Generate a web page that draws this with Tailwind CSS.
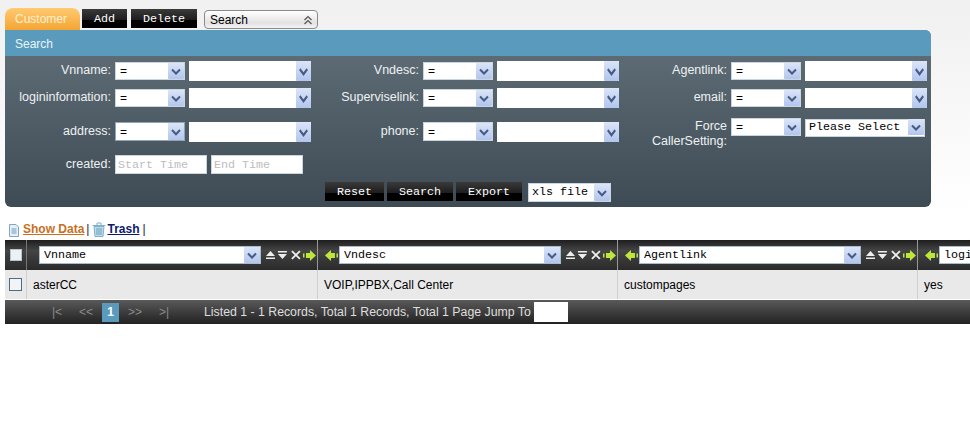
<!DOCTYPE html>
<html lang="en">
<head>
    <meta charset="UTF-8">
    <title>Customer</title>
    <script src="https://cdn.jsdelivr.net/npm/@tailwindcss/browser@4"></script>
</head>
<body class="h-[426px] w-[970px] overflow-hidden bg-[linear-gradient(#f0f0f0,#fff_210px)] font-['Liberation_Sans',Arial,sans-serif] text-xs text-black">
    <!-- shared icons -->
    <svg class="absolute h-0 w-0">
        <defs>
            <linearGradient id="arrbg" x1="0" y1="0" x2="0" y2="1">
                <stop offset="0" stop-color="#dbe5f8"/>
                <stop offset="1" stop-color="#b2c5ee"/>
            </linearGradient>
        </defs>
        <symbol id="arr" viewBox="0 0 16 16" preserveAspectRatio="none">
            <rect width="16" height="16" rx="1" fill="url(#arrbg)"/>
            <path d="M4 6.500 8 10.500 12 6.500" fill="none" stroke="#465a82" stroke-width="2"/>
        </symbol>
        <symbol id="right" viewBox="0 0 14 13">
            <path d="M0 4.500H1.500V8.500H0ZM3 4H7V1L13 6.500 7 12V9H3Z" fill="#bfe63c"/>
        </symbol>
        <symbol id="left" viewBox="0 0 14 13">
            <path d="M14 4.500H12.500V8.500H14ZM11 4H7V1L1 6.500 7 12V9H11Z" fill="#bfe63c"/>
        </symbol>
        <symbol id="tools" viewBox="0 0 36 10">
            <path d="M0 6 4.500 1 9 6ZM0 7.500H9V9H0Z" fill="#eee"/>
            <path d="M12 1H21V2.500H12ZM12 4H21L16.500 9Z" fill="#eee"/>
            <path d="M26 1 34 9M34 1 26 9" stroke="#eee" stroke-width="1.800" fill="none"/>
        </symbol>
    </svg>

    <!-- Tabs -->
    <div class="flex h-[30px] items-end pl-[5px]">
        <div class="flex h-[22px] w-[75px] items-center rounded-t-lg bg-linear-to-b from-[#ffca70] to-[#f4a52f] pl-[10px] text-[#fdf0d0]">Customer</div>
        <button class="mb-[2px] ml-[2px] h-[19px] w-[45px] bg-[linear-gradient(#3a3a3a,#1c1c1c_60%,#000_60%)] pt-[3px] font-['Liberation_Mono',monospace] text-[11.700px] text-white">Add</button>
        <button class="mb-[2px] ml-1 h-[19px] w-[66px] bg-[linear-gradient(#3a3a3a,#1c1c1c_60%,#000_60%)] pt-[3px] font-['Liberation_Mono',monospace] text-[11.700px] text-white">Delete</button>
        <div class="mb-px ml-[7px] flex h-[19px] w-[114px] items-center justify-between rounded border border-[#8a8a8a] bg-[linear-gradient(#fff,#e2e2e2_70%,#f4f4f4)] pl-[5px] pr-[4px]">
            <span>Search</span>
            <svg class="h-[10px] w-[10px]" viewBox="0 0 10 10" fill="none" stroke="#555" stroke-width="1.200"><path d="M1.500 5 5 1.500 8.500 5M1.500 9 5 5.500 8.500 9"/></svg>
        </div>
    </div>

    <!-- Search panel -->
    <div class="ml-[5px] h-[177px] w-[926px] overflow-hidden rounded-tr-md rounded-b-md bg-linear-to-b from-[#627079] to-[#3e4b54]">
        <div class="flex h-[26px] items-center bg-[#5a9bbd] pl-[10px] pt-px text-[#e8f4fa]">Search</div>
        <div class="grid grid-cols-[308px_308px_310px] grid-rows-[27px_29px_38px_27px] pt-[5px] text-[12.500px] text-[#eef1f3]">
            <!-- row 1 -->
            <div class="flex items-start">
                <label class="w-[106px] pt-px text-right">Vnname:</label>
                <div class="relative ml-1 mt-px h-[18px] w-[70px]"><select class="h-full w-full appearance-none border border-[#c9d6de] bg-white pl-1 text-xs text-black"><option>=</option></select><svg class="pointer-events-none absolute right-px top-px h-4 w-4"><use href="#arr"/></svg></div>
                <div class="relative ml-1 h-5 w-[122px]"><select class="h-full w-full appearance-none bg-white"></select><svg class="pointer-events-none absolute right-0 top-0 h-5 w-[15px]"><use href="#arr"/></svg></div>
            </div>
            <div class="flex items-start">
                <label class="w-[106px] pt-px text-right">Vndesc:</label>
                <div class="relative ml-1 mt-px h-[18px] w-[70px]"><select class="h-full w-full appearance-none border border-[#c9d6de] bg-white pl-1 text-xs text-black"><option>=</option></select><svg class="pointer-events-none absolute right-px top-px h-4 w-4"><use href="#arr"/></svg></div>
                <div class="relative ml-1 h-5 w-[122px]"><select class="h-full w-full appearance-none bg-white"></select><svg class="pointer-events-none absolute right-0 top-0 h-5 w-[15px]"><use href="#arr"/></svg></div>
            </div>
            <div class="flex items-start">
                <label class="w-[106px] pt-px text-right">Agentlink:</label>
                <div class="relative ml-1 mt-px h-[18px] w-[70px]"><select class="h-full w-full appearance-none border border-[#c9d6de] bg-white pl-1 text-xs text-black"><option>=</option></select><svg class="pointer-events-none absolute right-px top-px h-4 w-4"><use href="#arr"/></svg></div>
                <div class="relative ml-1 h-5 w-[122px]"><select class="h-full w-full appearance-none bg-white"></select><svg class="pointer-events-none absolute right-0 top-0 h-5 w-[15px]"><use href="#arr"/></svg></div>
            </div>
            <!-- row 2 -->
            <div class="flex items-start">
                <label class="w-[106px] pt-px text-right">logininformation:</label>
                <div class="relative ml-1 mt-px h-[18px] w-[70px]"><select class="h-full w-full appearance-none border border-[#c9d6de] bg-white pl-1 text-xs text-black"><option>=</option></select><svg class="pointer-events-none absolute right-px top-px h-4 w-4"><use href="#arr"/></svg></div>
                <div class="relative ml-1 h-5 w-[122px]"><select class="h-full w-full appearance-none bg-white"></select><svg class="pointer-events-none absolute right-0 top-0 h-5 w-[15px]"><use href="#arr"/></svg></div>
            </div>
            <div class="flex items-start">
                <label class="w-[106px] pt-px text-right">Superviselink:</label>
                <div class="relative ml-1 mt-px h-[18px] w-[70px]"><select class="h-full w-full appearance-none border border-[#c9d6de] bg-white pl-1 text-xs text-black"><option>=</option></select><svg class="pointer-events-none absolute right-px top-px h-4 w-4"><use href="#arr"/></svg></div>
                <div class="relative ml-1 h-5 w-[122px]"><select class="h-full w-full appearance-none bg-white"></select><svg class="pointer-events-none absolute right-0 top-0 h-5 w-[15px]"><use href="#arr"/></svg></div>
            </div>
            <div class="flex items-start">
                <label class="w-[106px] pt-px text-right">email:</label>
                <div class="relative ml-1 mt-px h-[18px] w-[70px]"><select class="h-full w-full appearance-none border border-[#c9d6de] bg-white pl-1 text-xs text-black"><option>=</option></select><svg class="pointer-events-none absolute right-px top-px h-4 w-4"><use href="#arr"/></svg></div>
                <div class="relative ml-1 h-5 w-[122px]"><select class="h-full w-full appearance-none bg-white"></select><svg class="pointer-events-none absolute right-0 top-0 h-5 w-[15px]"><use href="#arr"/></svg></div>
            </div>
            <!-- row 3 -->
            <div class="flex h-[29px] items-center">
                <label class="w-[106px] text-right">address:</label>
                <div class="relative ml-1 h-[19px] w-[70px]"><select class="h-full w-full appearance-none border border-[#8fa6b8] bg-white pl-1 text-xs text-black"><option>=</option></select><svg class="pointer-events-none absolute right-px top-px h-[17px] w-4"><use href="#arr"/></svg></div>
                <div class="relative ml-1 h-5 w-[122px]"><select class="h-full w-full appearance-none bg-white"></select><svg class="pointer-events-none absolute right-0 top-0 h-5 w-[15px]"><use href="#arr"/></svg></div>
            </div>
            <div class="flex h-[29px] items-center">
                <label class="w-[106px] text-right">phone:</label>
                <div class="relative ml-1 h-[19px] w-[70px]"><select class="h-full w-full appearance-none border border-[#c9d6de] bg-white pl-1 text-xs text-black"><option>=</option></select><svg class="pointer-events-none absolute right-px top-px h-[17px] w-4"><use href="#arr"/></svg></div>
                <div class="relative ml-1 h-5 w-[122px]"><select class="h-full w-full appearance-none bg-white"></select><svg class="pointer-events-none absolute right-0 top-0 h-5 w-[15px]"><use href="#arr"/></svg></div>
            </div>
            <div class="flex items-start">
                <label class="w-[106px] pt-[2px] text-right leading-[15px]">Force<br>CallerSetting:</label>
                <div class="relative ml-1 mt-px h-[18px] w-[70px]"><select class="h-full w-full appearance-none border border-[#c9d6de] bg-white pl-1 text-xs text-black"><option>=</option></select><svg class="pointer-events-none absolute right-px top-px h-4 w-4"><use href="#arr"/></svg></div>
                <div class="relative ml-1 mt-px h-[18px] w-[120px]"><select class="h-full w-full appearance-none border border-[#c9d6de] bg-white pl-[3px] font-['Liberation_Mono',monospace] text-[11.700px] text-black"><option>Please Select</option></select><svg class="pointer-events-none absolute right-px top-px h-4 w-4"><use href="#arr"/></svg></div>
            </div>
            <!-- row 4 -->
            <div class="flex items-start">
                <label class="w-[106px] pt-px text-right">created:</label>
                <input placeholder="Start Time" class="ml-1 h-[19px] w-[92px] border border-[#c9d6de] bg-white pl-[2px] font-['Liberation_Mono',monospace] text-[11.700px] placeholder:text-[#bdbdbd]">
                <input placeholder="End Time" class="ml-1 h-[19px] w-[92px] border border-[#c9d6de] bg-white pl-[2px] font-['Liberation_Mono',monospace] text-[11.700px] placeholder:text-[#bdbdbd]">
            </div>
        </div>
        <!-- buttons -->
        <div class="flex items-start justify-center gap-[3px] font-['Liberation_Mono',monospace] text-[11.700px] text-white">
            <button class="h-[19px] w-[59px] bg-[linear-gradient(#3a3a3a,#1c1c1c_60%,#000_60%)] pt-[3px]">Reset</button>
            <button class="h-[19px] w-[66px] bg-[linear-gradient(#3a3a3a,#1c1c1c_60%,#000_60%)] pt-[3px]">Search</button>
            <button class="h-[19px] w-[66px] bg-[linear-gradient(#3a3a3a,#1c1c1c_60%,#000_60%)] pt-[3px]">Export</button>
            <div class="relative ml-[3px] mt-px h-[19px] w-[83px]"><select class="h-full w-full appearance-none border border-[#c9d6de] bg-white pl-[3px] text-black"><option>xls file</option></select><svg class="pointer-events-none absolute right-px top-px h-[17px] w-4"><use href="#arr"/></svg></div>
        </div>
    </div>

    <!-- Links -->
    <div class="flex h-[33px] items-end pb-[3px] pl-2">
        <svg class="h-[13px] w-[12px]" viewBox="0 0 12 13"><path d="M1.500.500H8L10.500 3V12.500H1.500Z" fill="#e6f0f8" stroke="#7fa6c4"/><path d="M3.500 5H8.500M3.500 7H8.500M3.500 9H8.500" stroke="#6f9abb"/></svg>
        <a class="ml-[3px] font-bold text-[#c8701e] underline">Show Data</a>
        <span class="ml-[2px] text-[#1a1a40]">|</span>
        <svg class="ml-[3px] h-[15px] w-[14px]" viewBox="0 0 14 15"><path d="M.5 3.500H13.500M5 3V1H9V3" fill="none" stroke="#7fb0cc"/><path d="M2 4.500H12L11 14.500H3Z" fill="#bcdcec" stroke="#7fb0cc"/><path d="M5 6V13M7 6V13M9 6V13" stroke="#6d9fbc"/></svg>
        <a class="ml-px font-bold text-[#0b1a6e] underline">Trash</a>
        <span class="ml-[3px] text-[#1a1a40]">|</span>
    </div>

    <!-- Table -->
    <div class="ml-[5px] w-[965px] overflow-hidden">
        <div class="flex h-[30px] w-[1250px] items-center bg-[linear-gradient(#1e1e1e,#444_35%,#2a2a2a)]">
            <div class="flex h-full w-[22px] shrink-0 items-center justify-center border-r border-[#777]"><input type="checkbox" class="h-3 w-3 appearance-none border border-[#b8c4cc] bg-[#eef1f4]"></div>
            <div class="flex h-full w-[291px] shrink-0 items-center border-r border-[#999] pl-3">
                <div class="relative h-[18px] w-[223px]"><select class="h-full w-full appearance-none border border-[#a9bccb] bg-white pl-[4px] pt-px font-['Liberation_Mono',monospace] text-[11.700px]"><option>Vnname</option></select><svg class="pointer-events-none absolute right-px top-px h-4 w-4"><use href="#arr"/></svg></div>
                <svg class="ml-[5px] h-[10px] w-[36px]"><use href="#tools"/></svg>
                <svg class="ml-px h-[13px] w-[14px]"><use href="#right"/></svg>
            </div>
            <div class="flex h-full w-[300px] shrink-0 items-center border-r border-[#999] pl-[6px]">
                <svg class="h-[13px] w-[14px]"><use href="#left"/></svg>
                <div class="relative ml-[1px] h-[18px] w-[223px]"><select class="h-full w-full appearance-none border border-[#a9bccb] bg-white pl-[4px] pt-px font-['Liberation_Mono',monospace] text-[11.700px]"><option>Vndesc</option></select><svg class="pointer-events-none absolute right-px top-px h-4 w-4"><use href="#arr"/></svg></div>
                <svg class="ml-[5px] h-[10px] w-[36px]"><use href="#tools"/></svg>
                <svg class="ml-px h-[13px] w-[14px]"><use href="#right"/></svg>
            </div>
            <div class="flex h-full w-[300px] shrink-0 items-center border-r border-[#999] pl-[6px]">
                <svg class="h-[13px] w-[14px]"><use href="#left"/></svg>
                <div class="relative ml-[1px] h-[18px] w-[223px]"><select class="h-full w-full appearance-none border border-[#a9bccb] bg-white pl-[4px] pt-px font-['Liberation_Mono',monospace] text-[11.700px]"><option>Agentlink</option></select><svg class="pointer-events-none absolute right-px top-px h-4 w-4"><use href="#arr"/></svg></div>
                <svg class="ml-[5px] h-[10px] w-[36px]"><use href="#tools"/></svg>
                <svg class="ml-px h-[13px] w-[14px]"><use href="#right"/></svg>
            </div>
            <div class="flex h-full w-[300px] shrink-0 items-center pl-[6px]">
                <svg class="h-[13px] w-[14px]"><use href="#left"/></svg>
                <div class="relative ml-[1px] h-[18px] w-[223px]"><select class="h-full w-full appearance-none border border-[#a9bccb] bg-white pl-[4px] pt-px font-['Liberation_Mono',monospace] text-[11.700px]"><option>logininformation</option></select></div>
            </div>
        </div>
        <div class="flex h-[29px] w-[1250px] items-center bg-[#e9e9e9]">
            <div class="flex h-full w-[22px] shrink-0 items-center justify-center border-r border-[#cfcfcf]"><input type="checkbox" class="h-[13px] w-[13px] appearance-none border border-[#4e6c88] bg-[#f1f3f5]"></div>
            <div class="flex h-full w-[291px] shrink-0 items-center border-r border-[#cfcfcf] pl-[6px]">asterCC</div>
            <div class="flex h-full w-[300px] shrink-0 items-center border-r border-[#cfcfcf] pl-[6px]">VOIP,IPPBX,Call Center</div>
            <div class="flex h-full w-[300px] shrink-0 items-center border-r border-[#cfcfcf] pl-[6px]">custompages</div>
            <div class="flex h-full w-[300px] shrink-0 items-center pl-[6px]">yes</div>
        </div>
        <!-- Pager -->
        <div class="mt-px flex h-6 items-center bg-linear-to-b from-[#5a5a5a] to-[#222] text-[#dedede]">
            <span class="ml-[47px] w-[27px] text-[#8a8a8a]">|&lt;</span>
            <span class="w-[23px] text-[#8a8a8a]">&lt;&lt;</span>
            <span class="flex h-[19px] w-[17px] items-center justify-center bg-[#5a9bbd] font-bold text-white">1</span>
            <span class="ml-[9px] w-[31px] text-[#8a8a8a]">&gt;&gt;</span>
            <span class="w-[45px] text-[#8a8a8a]">&gt;|</span>
            <span class="text-[12.300px]">Listed 1 - 1 Records, Total 1 Records, Total 1 Page Jump To</span>
            <input class="ml-[3px] h-5 w-[34px] bg-white">
        </div>
    </div>
</body>
</html>
